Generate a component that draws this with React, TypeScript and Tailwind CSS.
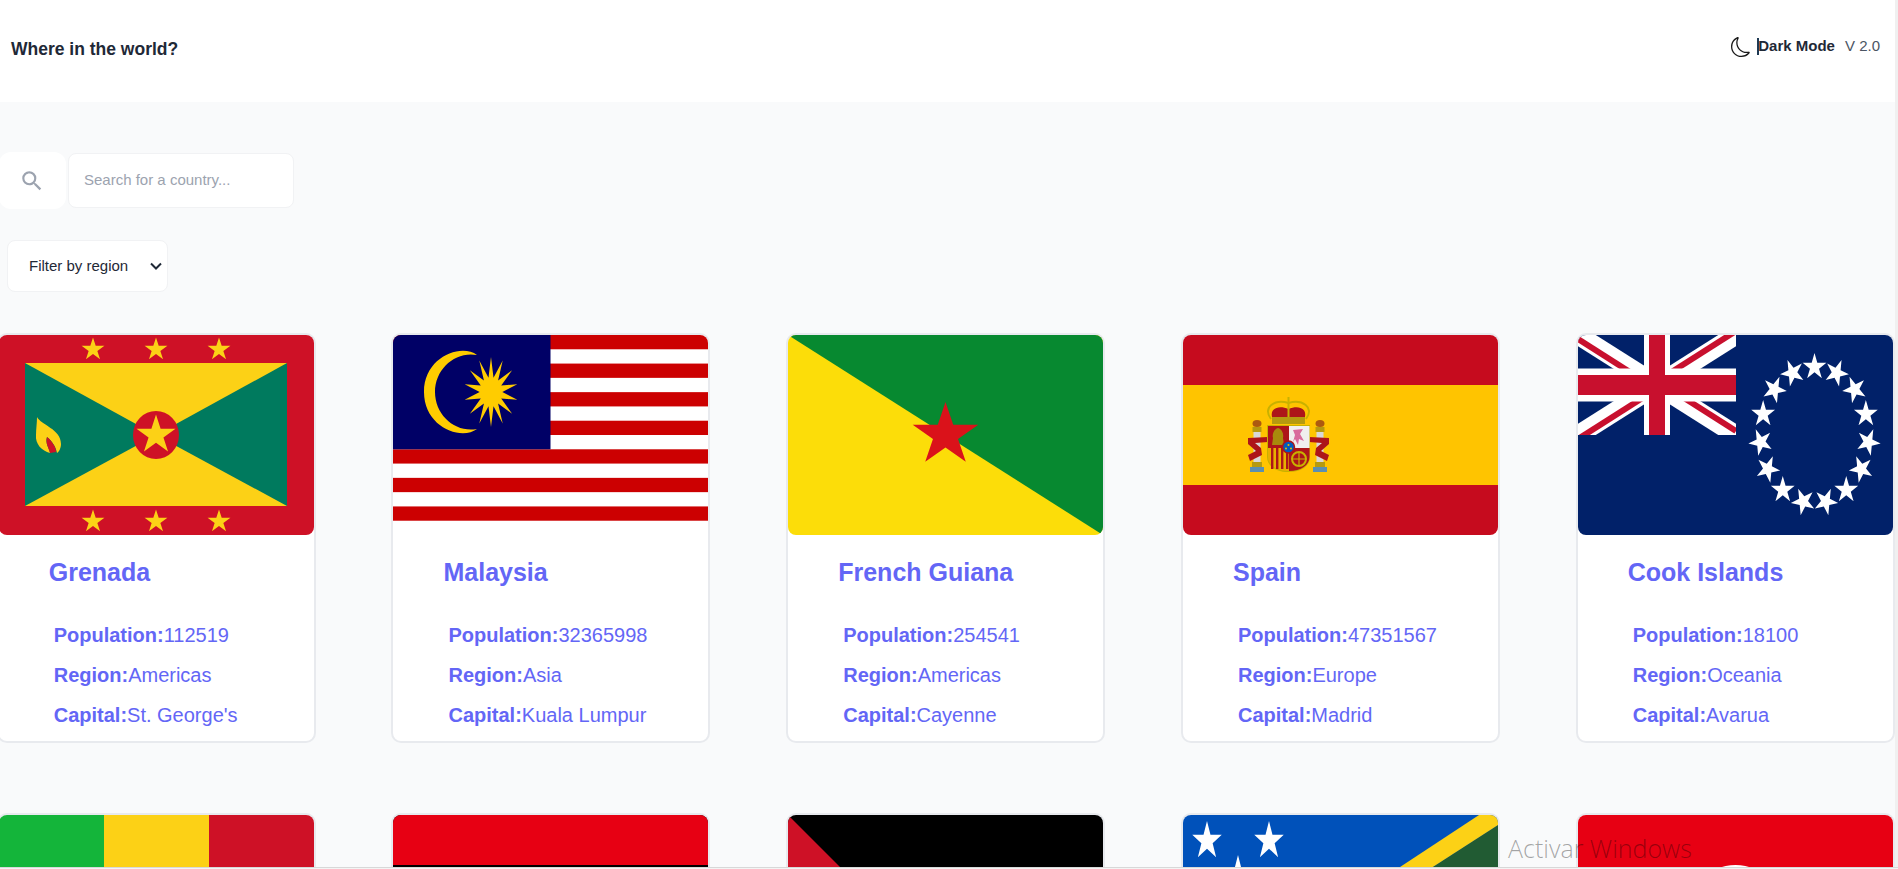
import React from "react";
import { MdSearch } from "react-icons/md";
import { BsMoon } from "react-icons/bs";

// 5-pointed (or n-pointed) star as polygon points, flags are drawn in a 315x200 box
const star = (
	cx: number,
	cy: number,
	rx: number,
	ry: number = rx,
	rotate: number = 0,
	n: number = 5,
	inner: number = 0.382
): string => {
	const pts: string[] = [];
	for (let i = 0; i < n * 2; i++) {
		const r = i % 2 === 0 ? 1 : inner;
		const a = ((rotate + (i * 180) / n) * Math.PI) / 180;
		pts.push(`${(cx + Math.sin(a) * rx * r).toFixed(2)},${(cy - Math.cos(a) * ry * r).toFixed(2)}`);
	}
	return pts.join(" ");
};

const Flag: React.FC<{ children: React.ReactNode }> = ({ children }) => (
	<svg viewBox="0 0 315 200" preserveAspectRatio="none" className="block w-[315px] h-[200px] rounded-lg">
		{children}
	</svg>
);

const Grenada = () => (
	<Flag>
		<rect width="315" height="200" fill="#ce1126" />
		<rect x="26" y="28" width="262" height="143" fill="#007a5e" />
		<polygon points="26,28 288,28 157,100" fill="#fcd116" />
		<polygon points="26,171 288,171 157,100" fill="#fcd116" />
		<ellipse cx="157" cy="100" rx="23" ry="24" fill="#ce1126" />
		<polygon points={star(157, 100, 20.5)} fill="#fcd116" />
		{[94, 157, 220].map((x) => (
			<React.Fragment key={x}>
				<polygon points={star(x, 14.5, 12)} fill="#fcd116" />
				<polygon points={star(x, 186.5, 12)} fill="#fcd116" />
			</React.Fragment>
		))}
		<path d="M38 82 C42 90 62 94 62 109 C62 113 60 117 58 118 C57 112 53 106 48 102 C46 108 50 113 51 118 C43 116 36 109 37 100 C37 94 38 88 38 82Z" fill="#fcd116" />
		<path d="M48 102 C53 106 57 112 57 117 L51 118 C50 113 46 108 48 102Z" fill="#ce1126" />
	</Flag>
);

const Malaysia = () => (
	<Flag>
		<rect width="315" height="200" fill="#fff" />
		{[0, 2, 4, 6, 8, 10, 12].map((i) => (
			<rect key={i} y={i * 14.286} width="315" height="14.286" fill="#cc0001" />
		))}
		<rect width="157.5" height="114.3" fill="#000066" />
		<path d="M84 20 C68 8 31 22 31 57 C31 92 68 106 84 94 C62 98 42 80 42 57 C42 34 62 16 84 20Z" fill="#ffcc00" />
		<polygon points={star(98, 57, 27, 35, 0, 14, 0.42)} fill="#ffcc00" />
	</Flag>
);

const FrenchGuiana = () => (
	<Flag>
		<rect width="315" height="200" fill="#fcdd09" />
		<polygon points="0,0 315,0 315,200" fill="#078930" />
		<polygon points={star(157.5, 100, 34.5, 33)} fill="#da121a" />
	</Flag>
);

const Spain = () => (
	<Flag>
		<rect width="315" height="200" fill="#c60b1e" />
		<rect y="50" width="315" height="100" fill="#ffc400" />
		{/* pillars */}
		{[74, 137].map((x) => (
			<g key={x}>
				<rect x={x - 3.5} y="97" width="7" height="30" fill="#d8d8d8" />
				<rect x={x - 4.5} y="92" width="9" height="5" fill="#b59a10" />
				<ellipse cx={x} cy="88.5" rx="4.5" ry="3.5" fill="#ad5a10" />
				<rect x={x - 5} y="127" width="10" height="5" fill="#b59a10" />
				<rect x={x - 7} y="132" width="14" height="5" fill="#5b8fb0" />
			</g>
		))}
		{/* ribbons */}
		<path d="M65 103 L85 102 L85 107 L72 108 L78 113 L79 120 L67 126 L65 120 L73 116 L65 109Z" fill="#ad1519" />
		<path d="M146 103 L126 102 L126 107 L139 108 L133 113 L132 120 L144 126 L146 120 L138 116 L146 109Z" fill="#ad1519" />
		{/* crown */}
		<path d="M89 82 C87 73 96 70 105.5 74 C115 70 124 73 122 82Z" fill="#ad1519" />
		<path d="M88 84 C79 72 92 64 105.5 68 C119 64 132 72 123 84" fill="none" stroke="#c8b100" strokeWidth="2" />
		<path d="M105.5 62 V82" stroke="#c8b100" strokeWidth="2" />
		<rect x="89" y="82" width="33" height="7" fill="#b59a10" />
		{/* shield */}
		<path d="M84 90 L127 90 L127 122 C127 131 118 137 105.5 137 C93 137 84 131 84 122Z" fill="#c8b100" />
		<rect x="85" y="91" width="21" height="22" fill="#ad1519" />
		<rect x="106" y="91" width="20.5" height="22" fill="#f0eeee" />
		<path d="M85 113 L106 113 L106 136 C94 136 85 130 85 122Z" fill="#e8b000" />
		{[88, 93, 98, 103].map((x) => (
			<rect key={x} x={x} y="113" width="2.4" height="21" fill="#ad1519" />
		))}
		<path d="M106 113 L126.5 113 L126.5 122 C126.5 130 118 136 106 136Z" fill="#ad1519" />
		<circle cx="116" cy="124" r="7" fill="none" stroke="#c8b100" strokeWidth="2" />
		<path d="M116 117 V131 M109 124 H123" stroke="#c8b100" strokeWidth="1.2" />
		<path d="M110 95 L120 94 L117 99 L121 106 L116 104 L115 110 L112 104 L110 107 L112 100Z" fill="#d96a9c" />
		<path d="M95 93 C99 94 101 99 100 103 L101 110 L89 110 L90 103 C89 99 91 94 95 93Z" fill="#a88a0c" />
		<circle cx="105.5" cy="112" r="6" fill="#005bbf" stroke="#ad1519" strokeWidth="1.5" />
		<circle cx="105.5" cy="110" r="1" fill="#e8c000" />
		<circle cx="103" cy="113.5" r="1" fill="#e8c000" />
		<circle cx="108" cy="113.5" r="1" fill="#e8c000" />
	</Flag>
);

const CookIslands = () => (
	<Flag>
		<rect width="315" height="200" fill="#012169" />
		<svg x="0" y="0" width="158" height="100" viewBox="0 0 158 100">
			<line x1="0" y1="0" x2="158" y2="100" stroke="#fff" strokeWidth="19" />
			<line x1="158" y1="0" x2="0" y2="100" stroke="#fff" strokeWidth="19" />
			<line x1="0" y1="4" x2="66" y2="46" stroke="#c8102e" strokeWidth="6" />
			<line x1="158" y1="-4" x2="92" y2="38" stroke="#c8102e" strokeWidth="6" />
			<line x1="0" y1="104" x2="66" y2="62" stroke="#c8102e" strokeWidth="6" />
			<line x1="158" y1="96" x2="92" y2="54" stroke="#c8102e" strokeWidth="6" />
			<rect x="66" width="26" height="100" fill="#fff" />
			<rect y="33.5" width="158" height="33" fill="#fff" />
			<rect x="71" width="16" height="100" fill="#c8102e" />
			<rect y="40" width="158" height="20" fill="#c8102e" />
		</svg>
		{Array.from({ length: 15 }).map((_, i) => {
			const deg = i * 24;
			const a = (deg * Math.PI) / 180;
			return (
				<polygon
					key={i}
					points={star(236.5 + Math.sin(a) * 54, 100 - Math.cos(a) * 68, 12.5, 14, deg)}
					fill="#fff"
				/>
			);
		})}
	</Flag>
);

const Mali = () => (
	<Flag>
		<rect width="105" height="200" fill="#14b53a" />
		<rect x="105" width="105" height="200" fill="#fcd116" />
		<rect x="210" width="105" height="200" fill="#ce1126" />
	</Flag>
);

const RedBlack = () => (
	<Flag>
		<rect width="315" height="200" fill="#000" />
		<rect width="315" height="50" fill="#e70013" />
	</Flag>
);

const Jordan = () => (
	<Flag>
		<rect width="315" height="66" fill="#000" />
		<rect y="66" width="315" height="68" fill="#fff" />
		<rect y="134" width="315" height="66" fill="#007a3d" />
		<polygon points="0,0 100,100 0,200" fill="#ce1126" />
	</Flag>
);

const SolomonIslands = () => (
	<Flag>
		<rect width="315" height="200" fill="#0051ba" />
		<polygon points="315,10 315,200 20,200" fill="#215b33" />
		<polygon points="296,0 315,0 315,10 20,200 0,200 0,195" fill="#fcd116" />
		{[
			[24, 26],
			[86, 26],
			[55, 60],
			[24, 94],
			[86, 94],
		].map(([x, y]) => (
			<polygon key={`${x}-${y}`} points={star(x, y, 15.5, 20)} fill="#fff" />
		))}
	</Flag>
);

const Tunisia = () => (
	<Flag>
		<rect width="315" height="200" fill="#e70013" />
		<circle cx="157.5" cy="100" r="50" fill="#fff" />
	</Flag>
);

interface Country {
	name: string;
	flag: React.ReactNode;
	population?: number;
	region?: string;
	capital?: string;
}

// second row is cut off by the window, only the flags can be seen
const countries: Country[] = [
	{ name: "Grenada", flag: <Grenada />, population: 112519, region: "Americas", capital: "St. George's" },
	{ name: "Malaysia", flag: <Malaysia />, population: 32365998, region: "Asia", capital: "Kuala Lumpur" },
	{ name: "French Guiana", flag: <FrenchGuiana />, population: 254541, region: "Americas", capital: "Cayenne" },
	{ name: "Spain", flag: <Spain />, population: 47351567, region: "Europe", capital: "Madrid" },
	{ name: "Cook Islands", flag: <CookIslands />, population: 18100, region: "Oceania", capital: "Avarua" },
	{ name: "Mali", flag: <Mali /> },
	{ name: "Red", flag: <RedBlack /> },
	{ name: "Jordan", flag: <Jordan /> },
	{ name: "Solomon Islands", flag: <SolomonIslands /> },
	{ name: "Tunisia", flag: <Tunisia /> },
];

const CountryCard: React.FC<{ country: Country }> = ({ country }) => (
	<div className="bg-white rounded-[10px] border-2 border-[#e8eaee] h-[410px] text-[#6366f6]">
		{country.flag}
		{country.population !== undefined && (
			<>
				<h2 className="mt-[21px] pl-[50px] text-[25px] leading-8 font-bold">{country.name}</h2>
				<ul className="mt-[27px] pl-[55px] text-[20px] leading-10">
					<li><b>Population:</b>{country.population}</li>
					<li><b>Region:</b>{country.region}</li>
					<li><b>Capital:</b>{country.capital}</li>
				</ul>
			</>
		)}
	</div>
);

export default function App() {
	return (
		<div className="relative h-screen overflow-hidden bg-[#f9fafb] font-['Liberation_Sans',Arial,sans-serif]">
			<header className="h-[102px] bg-white flex items-center justify-between pl-[11px] pr-[18px] pb-[4px]">
				<h1 className="text-[17.5px] font-bold text-[#1f2937]">Where in the world?</h1>
				<div className="flex items-center mb-[5px]">
					<BsMoon className="w-5 h-5 text-[#1a1a1a]" />
					<span className="relative ml-[6px] text-[15px] font-bold text-[#1f2937] pl-px">
						<span className="absolute left-0 top-[3px] w-[2px] h-[17px] bg-[#1f3a54]" />
						Dark Mode
					</span>
					<span className="ml-[10px] text-[15px] text-[#4b5563]">V 2.0</span>
				</div>
			</header>

			<main className="pt-[50px]">
				<div className="flex items-center gap-[2px] -ml-px">
					<button className="w-[67px] h-[57px] bg-white rounded-xl flex items-center justify-center pr-[1px]">
						<MdSearch className="w-[26px] h-[26px] text-[#9ca3af]" />
					</button>
					<input
						type="text"
						placeholder="Search for a country..."
						className="w-[226px] h-[55px] bg-white rounded-lg border border-[#f1f2f4] pl-[15px] pb-[2px] text-[15px] outline-none placeholder:text-[#9ca3af]"
					/>
				</div>

				<button className="mt-[31px] ml-[7px] w-[161px] h-[52px] bg-white rounded-lg border border-[#f1f2f4] flex items-center justify-between pl-[21px] pr-[5px] text-[15px] text-[#1f2937]">
					Filter by region
					<svg viewBox="0 0 12 8" className="w-3 h-2" fill="none" stroke="#1f2937" strokeWidth="2">
						<path d="M1 1.5 L6 6.5 L11 1.5" />
					</svg>
				</button>

				<div className="mt-[41px] -ml-[3.3px] w-[1910px] grid grid-cols-[repeat(5,319px)] gap-x-[75.75px] gap-y-[70px]">
					{countries.map((c) => (
						<CountryCard key={c.name} country={c} />
					))}
				</div>
			</main>

			{/* window scrollbars */}
			<div className="absolute top-0 right-0 bottom-0 w-[3px] bg-[#f0f0f0]" />
			<div className="absolute left-0 right-0 bottom-0 h-[2px] bg-[#f4f4f4] border-t border-[#d8d8d8]" />

			{/* windows watermark */}
			<div className="absolute left-[1508px] top-[832px] font-['Open_Sans',sans-serif] font-light text-[25px] leading-8 text-black/35">
				Activar Windows
			</div>
		</div>
	);
}
